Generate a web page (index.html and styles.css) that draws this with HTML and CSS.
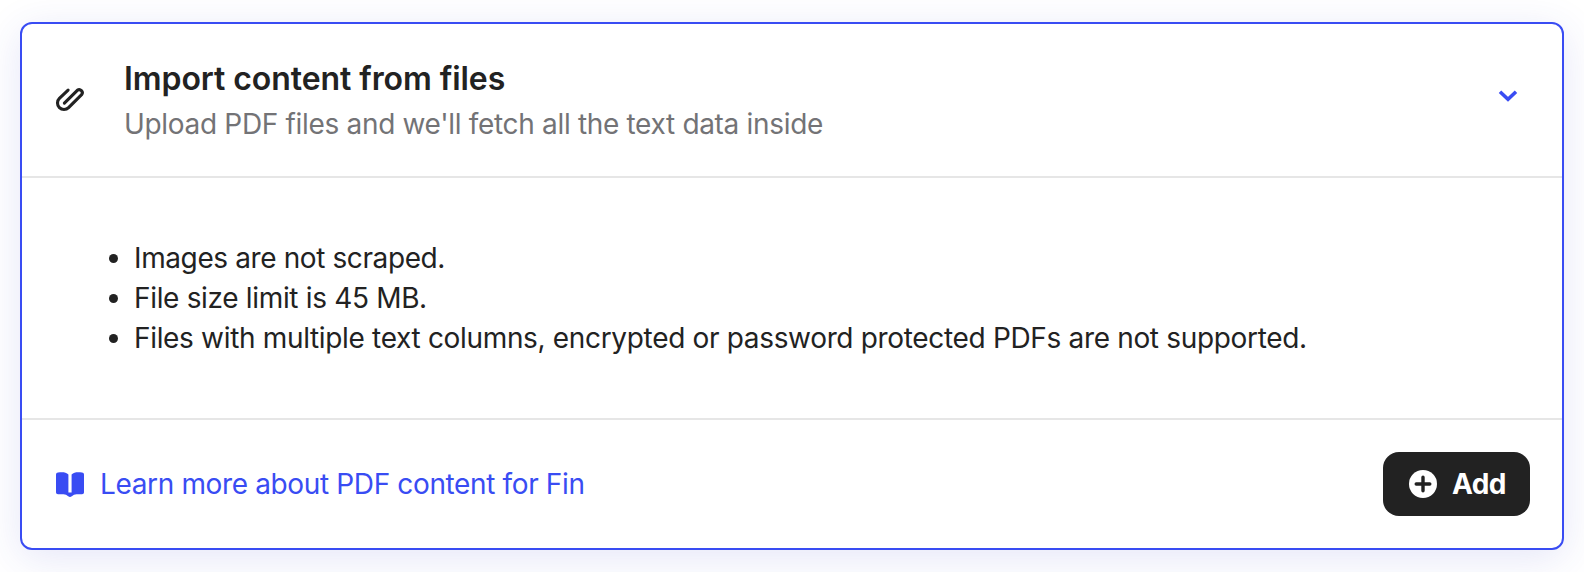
FILE: index.html
```html
<!DOCTYPE html>
<html lang="en">
<head>
<meta charset="utf-8">
<title>Import content from files</title>
<link rel="stylesheet" href="styles.css">
</head>
<body>
<section class="card">
  <header class="card-header">
    <svg class="clip" width="32" height="32" viewBox="0 0 32 32" fill="none" stroke="currentColor" stroke-width="3.1" stroke-linecap="round" stroke-linejoin="round"><path d="M14.1 5.1 5.4 13.4A6.5 6.5 0 0 0 14.6 22.6L27.6 9.7A3.1 3.1 0 0 0 23.3 5.3L10.4 18.1"/></svg>
    <div class="heading">
      <h2 class="title">Import content from files</h2>
      <p class="subtitle">Upload PDF files and we'll fetch all the text data inside</p>
    </div>
    <svg class="chevron" width="20" height="12" viewBox="0 0 20 12" fill="none" stroke="currentColor" stroke-width="3.6"><path d="M2 1.8 10 9.2 18 1.8"/></svg>
  </header>
  <div class="card-body">
    <ul class="notes">
      <li class="images">Images are not scraped.</li>
      <li>File size limit is 45 MB.</li>
      <li>Files with multiple text columns, encrypted or password protected PDFs are not supported.</li>
    </ul>
  </div>
  <footer class="card-footer">
    <a class="learn" href="#">
      <svg width="28" height="26" viewBox="0 0 28 26" fill="currentColor"><path d="M2 .6C6 .1 10 0 12.4 2.6V20.5H15.6V2.6C18 0 22 .1 26 .6Q28 .8 28 2.6V20.4Q28 22.2 26 22.2H20.5Q17.8 22.2 15.8 24.3Q14 25.8 12.2 24.3Q10.2 22.2 7.5 22.2H2Q0 22.2 0 20.4V2.6Q0 .8 2 .6Z"/></svg>
      <span>Learn more about PDF content for Fin</span>
    </a>
    <button class="add" type="button">
      <svg width="28" height="28" viewBox="0 0 28 28"><circle cx="14" cy="14" r="14" fill="#fff"/><path d="M14 7.2V20.8M7.2 14H20.8" stroke="#222" stroke-width="3.4" stroke-linecap="round"/></svg>
      <span>Add</span>
    </button>
  </footer>
</section>
</body>
</html>
```
FILE: styles.css
```css
* { box-sizing: border-box; }
body {
  margin: 0;
  height: 572px;
  padding: 22px 20px;
  overflow: hidden;
  background: #fff;
  color: #222;
  font-family: Inter, "Liberation Sans", sans-serif;
  font-size: 28px;
  line-height: 40px;
}
.card {
  height: 528px;
  display: flex;
  flex-direction: column;
  border: 2px solid #394cf3;
  border-radius: 12px;
  background: #fff;
  box-shadow: 0 8px 40px rgba(57, 60, 200, .13);
}
.card-header {
  height: 154px;
  display: flex;
  align-items: flex-start;
  padding: 35px 44px 0 32px;
  border-bottom: 2px solid #e6e6e6;
}
.clip { margin-top: 26px; }
.heading { flex: 1; margin-left: 38px; }
.title {
  margin: 0;
  font-size: 32px;
  line-height: 40px;
  font-weight: 600;
  letter-spacing: -.07px;
}
.subtitle { margin: 5px 0 0; color: #737376; letter-spacing: -.32px; }
.chevron { margin-top: 31px; color: #394cf3; }
.card-body {
  height: 242px;
  padding: 60px 32px;
  border-bottom: 2px solid #e6e6e6;
}
.notes {
  margin: 0;
  padding: 0 0 0 55px;
  list-style: none;
  letter-spacing: -.33px;
}
.notes li { display: flex; align-items: center; gap: 16px; white-space: nowrap; }
.notes .images { letter-spacing: -.39px; }
.notes li::before {
  content: "";
  width: 9px;
  height: 9px;
  border-radius: 50%;
  background: #222;
}
.card-footer {
  flex: 1;
  display: flex;
  align-items: center;
  justify-content: space-between;
  padding: 0 32px 0 34px;
}
.learn {
  display: flex;
  align-items: center;
  gap: 16px;
  color: #394cf3;
  letter-spacing: -.36px;
  text-decoration: none;
}
.learn svg { margin-top: 2px; }
.add {
  display: flex;
  align-items: center;
  gap: 15px;
  width: 147px;
  height: 64px;
  padding: 0 0 0 26px;
  border: 0;
  border-radius: 16px;
  background: #222;
  color: #fff;
  font: 700 28px/40px Inter, "Liberation Sans", sans-serif;
  letter-spacing: -.6px;
}
```
